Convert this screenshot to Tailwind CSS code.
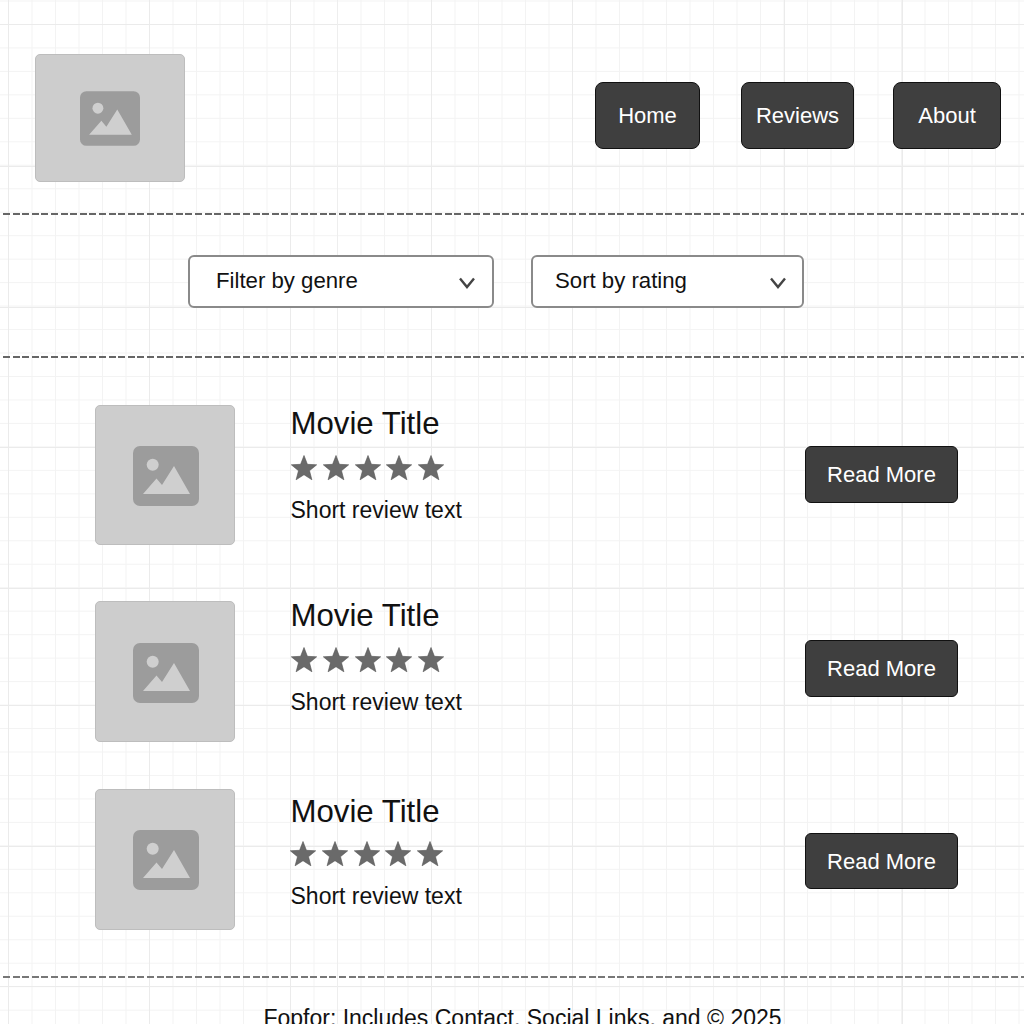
<!DOCTYPE html>
<html lang="en">
<head>
  <meta charset="UTF-8" />
  <meta name="viewport" content="width=device-width, initial-scale=1.0"/>
  <title>Movie Reviews</title>
  <script src="https://cdn.jsdelivr.net/npm/@tailwindcss/browser@4"></script>
</head>
<body class="bg-white h-[1024px] overflow-hidden text-[#111] font-['Liberation_Sans',Arial,sans-serif] bg-[linear-gradient(to_right,transparent_8px,#ebebeb_8px_9px,transparent_9px_149px,#ebebeb_149px_150px,transparent_150px_290px,#ebebeb_290px_291px,transparent_291px_337px,#eeeeee_337px_338px,transparent_338px_431px,#ebebeb_431px_432px,transparent_432px_572px,#ebebeb_572px_573px,transparent_573px_784px,#ebebeb_784px_785px,transparent_785px_902px,#ebebeb_902px_903px,transparent_903px),linear-gradient(to_bottom,transparent_24px,#ebebeb_24px_25px,transparent_25px_166px,#ebebeb_166px_167px,transparent_167px_307px,#ebebeb_307px_308px,transparent_308px_447px,#ebebeb_447px_448px,transparent_448px_588px,#ebebeb_588px_589px,transparent_589px_705px,#ebebeb_705px_706px,transparent_706px_846px,#ebebeb_846px_847px,transparent_847px_986px,#ebebeb_986px_987px,transparent_987px),linear-gradient(to_right,#f3f3f3_1px,transparent_1px),linear-gradient(to_bottom,#f3f3f3_1px,transparent_1px)] bg-size-[100%_100%,100%_100%,23.5px_23.5px,23.47px_23.47px] bg-position-[0_0,0_0,8px_0,0_0.5px]">

  <!-- header -->
  <header class="h-[213px] flex items-start pl-[35px]">
    <div class="mt-[54px] w-[150px] h-[128px] rounded-[5px] bg-[#cdcdcd] border border-[#bdbdbd] flex items-center justify-center">
      <svg width="60" height="55" viewBox="0 0 66 60">
        <rect width="66" height="60" rx="7" fill="#9c9c9c"/>
        <circle cx="19.7" cy="18.7" r="6" fill="#cfcfcf"/>
        <path d="M10 48 L23.5 32.5 L29 39 L41 20 L57 48 Z" fill="#cfcfcf"/>
      </svg>
    </div>
    <nav class="ml-[410px] mt-[82px] flex text-[22px] text-white">
      <a class="w-[105px] h-[67px] rounded-[8px] bg-[#3f3f3f] border border-[#111] flex items-center justify-center">Home</a>
      <a class="ml-[41px] w-[113px] h-[67px] rounded-[8px] bg-[#3f3f3f] border border-[#111] flex items-center justify-center">Reviews</a>
      <a class="ml-[39px] w-[108px] h-[67px] rounded-[8px] bg-[#3f3f3f] border border-[#111] flex items-center justify-center">About</a>
    </nav>
  </header>

  <div class="ml-[3px] h-[2px] bg-[repeating-linear-gradient(to_right,#666_0_7px,transparent_7px_9.6px)]"></div>

  <!-- filters -->
  <section class="h-[141px] flex items-start pl-[188px] pt-[40px] text-[22.2px]">
    <div class="relative w-[306px] h-[53px]">
      <select class="appearance-none w-full h-full pl-[26px] pb-[2px] rounded-[6px] bg-white border-2 border-[#8a8a8a]">
        <option>Filter by genre</option>
      </select>
      <svg class="absolute left-[271px] top-[22px]" width="16" height="12" viewBox="0 0 16 12"><path d="M1 1.5 L8 10 L15 1.5" fill="none" stroke="#444" stroke-width="2.4"/></svg>
    </div>
    <div class="relative ml-[37px] w-[273px] h-[53px]">
      <select class="appearance-none w-full h-full pl-[22px] pb-[2px] rounded-[6px] bg-white border-2 border-[#8a8a8a]">
        <option>Sort by rating</option>
      </select>
      <svg class="absolute left-[239px] top-[22px]" width="16" height="12" viewBox="0 0 16 12"><path d="M1 1.5 L8 10 L15 1.5" fill="none" stroke="#444" stroke-width="2.4"/></svg>
    </div>
  </section>

  <div class="ml-[3px] h-[2px] bg-[repeating-linear-gradient(to_right,#666_0_7px,transparent_7px_9.6px)]"></div>

  <!-- reviews -->
  <main class="pl-[95px] pt-[47px]">
    <article class="flex items-start h-[140px]">
      <div class="w-[140px] h-[140px] shrink-0 pl-[2px] pt-[2px] rounded-[5px] bg-[#cdcdcd] border border-[#bdbdbd] flex items-center justify-center">
        <svg width="66" height="60" viewBox="0 0 66 60">
          <rect width="66" height="60" rx="7" fill="#9c9c9c"/>
          <circle cx="19.7" cy="18.7" r="6" fill="#cfcfcf"/>
          <path d="M10 48 L23.5 32.5 L29 39 L41 20 L57 48 Z" fill="#cfcfcf"/>
        </svg>
      </div>
      <div class="ml-[56px] w-[514px]">
        <h2 class="mt-[1px] -ml-[0.5px] text-[31.2px] leading-[36px]">Movie Title</h2>
        <div class="mt-[13px] flex gap-[5.8px] h-[26px]">
          <svg width="26" height="26" viewBox="0 0 26 26"><path d="M13 .5 L16.4 9.3 L25.7 9.8 L18.5 15.7 L20.9 24.8 L13 19.7 L5.1 24.8 L7.5 15.7 L.3 9.8 L9.6 9.3 Z" fill="#6a6a6a" stroke="#555" stroke-width=".6"/></svg>
          <svg width="26" height="26" viewBox="0 0 26 26"><path d="M13 .5 L16.4 9.3 L25.7 9.8 L18.5 15.7 L20.9 24.8 L13 19.7 L5.1 24.8 L7.5 15.7 L.3 9.8 L9.6 9.3 Z" fill="#6a6a6a" stroke="#555" stroke-width=".6"/></svg>
          <svg width="26" height="26" viewBox="0 0 26 26"><path d="M13 .5 L16.4 9.3 L25.7 9.8 L18.5 15.7 L20.9 24.8 L13 19.7 L5.1 24.8 L7.5 15.7 L.3 9.8 L9.6 9.3 Z" fill="#6a6a6a" stroke="#555" stroke-width=".6"/></svg>
          <svg width="26" height="26" viewBox="0 0 26 26"><path d="M13 .5 L16.4 9.3 L25.7 9.8 L18.5 15.7 L20.9 24.8 L13 19.7 L5.1 24.8 L7.5 15.7 L.3 9.8 L9.6 9.3 Z" fill="#6a6a6a" stroke="#555" stroke-width=".6"/></svg>
          <svg width="26" height="26" viewBox="0 0 26 26"><path d="M13 .5 L16.4 9.3 L25.7 9.8 L18.5 15.7 L20.9 24.8 L13 19.7 L5.1 24.8 L7.5 15.7 L.3 9.8 L9.6 9.3 Z" fill="#6a6a6a" stroke="#555" stroke-width=".6"/></svg>
        </div>
        <p class="mt-[16px] -ml-[0.5px] text-[23px] leading-[26px]">Short review text</p>
      </div>
      <a class="mt-[41px] w-[153px] h-[57px] rounded-[6px] bg-[#3f3f3f] border border-[#111] text-white text-[22px] flex items-center justify-center">Read More</a>
    </article>

    <article class="mt-[56px] flex items-start h-[141px]">
      <div class="w-[140px] h-[141px] shrink-0 pl-[2px] pt-[2px] rounded-[5px] bg-[#cdcdcd] border border-[#bdbdbd] flex items-center justify-center">
        <svg width="66" height="60" viewBox="0 0 66 60">
          <rect width="66" height="60" rx="7" fill="#9c9c9c"/>
          <circle cx="19.7" cy="18.7" r="6" fill="#cfcfcf"/>
          <path d="M10 48 L23.5 32.5 L29 39 L41 20 L57 48 Z" fill="#cfcfcf"/>
        </svg>
      </div>
      <div class="ml-[56px] w-[514px]">
        <h2 class="-mt-[3px] -ml-[0.5px] text-[31.2px] leading-[36px]">Movie Title</h2>
        <div class="mt-[13px] flex gap-[5.8px] h-[26px]">
          <svg width="26" height="26" viewBox="0 0 26 26"><path d="M13 .5 L16.4 9.3 L25.7 9.8 L18.5 15.7 L20.9 24.8 L13 19.7 L5.1 24.8 L7.5 15.7 L.3 9.8 L9.6 9.3 Z" fill="#6a6a6a" stroke="#555" stroke-width=".6"/></svg>
          <svg width="26" height="26" viewBox="0 0 26 26"><path d="M13 .5 L16.4 9.3 L25.7 9.8 L18.5 15.7 L20.9 24.8 L13 19.7 L5.1 24.8 L7.5 15.7 L.3 9.8 L9.6 9.3 Z" fill="#6a6a6a" stroke="#555" stroke-width=".6"/></svg>
          <svg width="26" height="26" viewBox="0 0 26 26"><path d="M13 .5 L16.4 9.3 L25.7 9.8 L18.5 15.7 L20.9 24.8 L13 19.7 L5.1 24.8 L7.5 15.7 L.3 9.8 L9.6 9.3 Z" fill="#6a6a6a" stroke="#555" stroke-width=".6"/></svg>
          <svg width="26" height="26" viewBox="0 0 26 26"><path d="M13 .5 L16.4 9.3 L25.7 9.8 L18.5 15.7 L20.9 24.8 L13 19.7 L5.1 24.8 L7.5 15.7 L.3 9.8 L9.6 9.3 Z" fill="#6a6a6a" stroke="#555" stroke-width=".6"/></svg>
          <svg width="26" height="26" viewBox="0 0 26 26"><path d="M13 .5 L16.4 9.3 L25.7 9.8 L18.5 15.7 L20.9 24.8 L13 19.7 L5.1 24.8 L7.5 15.7 L.3 9.8 L9.6 9.3 Z" fill="#6a6a6a" stroke="#555" stroke-width=".6"/></svg>
        </div>
        <p class="mt-[16px] -ml-[0.5px] text-[23px] leading-[26px]">Short review text</p>
      </div>
      <a class="mt-[39px] w-[153px] h-[57px] rounded-[6px] bg-[#3f3f3f] border border-[#111] text-white text-[22px] flex items-center justify-center">Read More</a>
    </article>

    <article class="mt-[47px] flex items-start h-[141px]">
      <div class="w-[140px] h-[141px] shrink-0 pl-[2px] rounded-[5px] bg-[#cdcdcd] border border-[#bdbdbd] flex items-center justify-center">
        <svg width="66" height="60" viewBox="0 0 66 60">
          <rect width="66" height="60" rx="7" fill="#9c9c9c"/>
          <circle cx="19.7" cy="18.7" r="6" fill="#cfcfcf"/>
          <path d="M10 48 L23.5 32.5 L29 39 L41 20 L57 48 Z" fill="#cfcfcf"/>
        </svg>
      </div>
      <div class="ml-[56px] w-[514px]">
        <h2 class="mt-[5px] -ml-[0.5px] text-[31.2px] leading-[36px]">Movie Title</h2>
        <div class="-ml-[1px] mt-[11px] flex gap-[5.8px] h-[26px]">
          <svg width="26" height="26" viewBox="0 0 26 26"><path d="M13 .5 L16.4 9.3 L25.7 9.8 L18.5 15.7 L20.9 24.8 L13 19.7 L5.1 24.8 L7.5 15.7 L.3 9.8 L9.6 9.3 Z" fill="#6a6a6a" stroke="#555" stroke-width=".6"/></svg>
          <svg width="26" height="26" viewBox="0 0 26 26"><path d="M13 .5 L16.4 9.3 L25.7 9.8 L18.5 15.7 L20.9 24.8 L13 19.7 L5.1 24.8 L7.5 15.7 L.3 9.8 L9.6 9.3 Z" fill="#6a6a6a" stroke="#555" stroke-width=".6"/></svg>
          <svg width="26" height="26" viewBox="0 0 26 26"><path d="M13 .5 L16.4 9.3 L25.7 9.8 L18.5 15.7 L20.9 24.8 L13 19.7 L5.1 24.8 L7.5 15.7 L.3 9.8 L9.6 9.3 Z" fill="#6a6a6a" stroke="#555" stroke-width=".6"/></svg>
          <svg width="26" height="26" viewBox="0 0 26 26"><path d="M13 .5 L16.4 9.3 L25.7 9.8 L18.5 15.7 L20.9 24.8 L13 19.7 L5.1 24.8 L7.5 15.7 L.3 9.8 L9.6 9.3 Z" fill="#6a6a6a" stroke="#555" stroke-width=".6"/></svg>
          <svg width="26" height="26" viewBox="0 0 26 26"><path d="M13 .5 L16.4 9.3 L25.7 9.8 L18.5 15.7 L20.9 24.8 L13 19.7 L5.1 24.8 L7.5 15.7 L.3 9.8 L9.6 9.3 Z" fill="#6a6a6a" stroke="#555" stroke-width=".6"/></svg>
        </div>
        <p class="mt-[16px] -ml-[0.5px] text-[23px] leading-[26px]">Short review text</p>
      </div>
      <a class="mt-[44px] w-[153px] h-[56px] rounded-[6px] bg-[#3f3f3f] border border-[#111] text-white text-[22px] flex items-center justify-center">Read More</a>
    </article>
  </main>

  <div class="mt-[46px] ml-[3px] h-[2px] bg-[repeating-linear-gradient(to_right,#777_0_7px,transparent_7px_9.6px)]"></div>

  <footer class="pt-[27px] pl-[21px] text-center text-[23px] leading-[26px] whitespace-pre">Fopfor: Includes Contact, Social Links, and © 2025</footer>
</body>
</html>
